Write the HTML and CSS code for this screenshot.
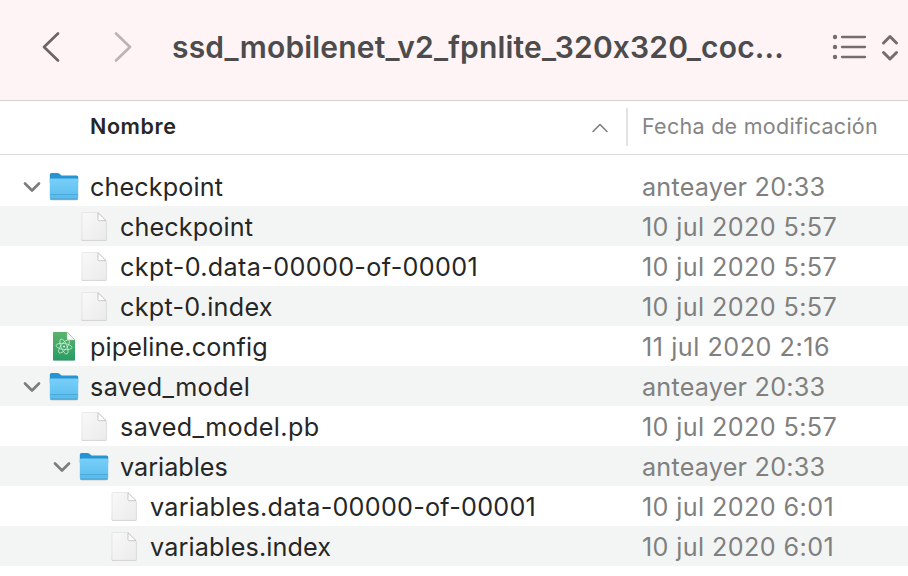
FILE: index.html
```html
<!DOCTYPE html>
<html lang="es">
<head>
<meta charset="utf-8">
<title>Finder</title>
<link rel="stylesheet" href="styles.css">
</head>
<body>
<svg class="defs" width="0" height="0" aria-hidden="true">
  <defs>
    <linearGradient id="front" x1="0" y1="0" x2="0" y2="1"><stop offset="0" stop-color="#78cff9"/><stop offset="1" stop-color="#5bbcec"/></linearGradient>
    <linearGradient id="paper" x1="0" y1="0" x2="1" y2="1"><stop offset="0" stop-color="#f9f9f9"/><stop offset="1" stop-color="#ebebeb"/></linearGradient>
    <linearGradient id="green" x1="0" y1="0" x2="0" y2="1"><stop offset="0" stop-color="#5cb46c"/><stop offset="1" stop-color="#279c63"/></linearGradient>
  </defs>
  <symbol id="folder" viewBox="0 0 32 32">
    <path d="M2 9h28v18.500q0 1.800-1.500 1.800h-25Q2 29.300 2 27.500z" fill="#000" opacity=".3"/>
    <path d="M1.800 3.700Q1.800 2 3.500 2h6q1.200 0 2 .8l1.400 1.100q.7.600 1.600.600h14Q30.200 4.500 30.200 6V12H1.800z" fill="#2594d3"/>
    <path d="M1.800 9.300Q1.800 7.600 3 7.600h26q1.200 0 1.200 1.700v17.500q0 1.500-1.500 1.500h-25.400q-1.500 0-1.500-1.500z" fill="url(#front)"/>
    <path d="M2 23.500h28" stroke="#3fa0d2" stroke-width=".7"/>
    <path d="M2 25.200h28" stroke="#4eadde" stroke-width=".4"/>
    <path d="M2.400 28h27.200" stroke="#3b9dcc" stroke-width=".8"/>
  </symbol>
  <symbol id="file" viewBox="0 0 32 32">
    <path d="M4.500 3H20l8.600 8.500v17.300q0 1.300-1.200 1.300h-22q-1.700 0-1.700-1.200z" fill="#000" opacity=".18"/>
    <path d="M4.800 1.500H20l8.300 8.300V28q0 1.300-1.300 1.300H5.300Q4 29.300 4 28V2.500Q4 1.500 4.800 1.500z" fill="url(#paper)" stroke="#dcdcdc" stroke-width=".6"/>
    <path d="M20 1.800v6.700q0 1.200 1.200 1.200H28z" fill="#fff"/>
    <path d="M28 9.700 20 1.800v6.700q0 1.200 1.200 1.200H28" fill="none" stroke="#b9b9b9" stroke-width=".8"/>
  </symbol>
  <symbol id="atom" viewBox="0 0 32 32">
    <path d="M5 2h14l8 8v20H5z" fill="#000" opacity=".14"/>
    <path d="M5.500 1h14L27 8.700v20q0 .8-.8.800H5.800q-.8 0-.8-.8V1.500Q5 1 5.500 1z" fill="url(#green)"/>
    <path d="M19 1 27 9h-7q-1 0-1-1z" fill="#f3f8f4" stroke="#9bbea2" stroke-width=".5"/>
    <g fill="none" stroke="#c9ecd2" stroke-width=".8">
      <ellipse cx="16" cy="15.500" rx="3" ry="8" transform="rotate(-22 16 15.500)"/>
      <ellipse cx="16" cy="15.500" rx="3" ry="8" transform="rotate(38 16 15.500)"/>
      <ellipse cx="16" cy="15.500" rx="3" ry="8" transform="rotate(98 16 15.500)"/>
    </g>
    <circle cx="16" cy="15.500" r="1" fill="#e6f8ea"/>
  </symbol>
  <symbol id="chev" viewBox="0 0 18 12"><path d="M2 2.500 9 9.500 16 2.500" fill="none" stroke="#7c7d7d" stroke-width="2.700" stroke-linecap="round" stroke-linejoin="round"/></symbol>
</svg>
<header class="toolbar">
  <svg class="nav" width="20" height="32" viewBox="0 0 20 32"><path d="M17 2.500 3 16 17 29.500" fill="none" stroke="#6e6465" stroke-width="2.700" stroke-linecap="round" stroke-linejoin="round"/></svg>
  <svg class="nav forward" width="20" height="32" viewBox="0 0 20 32"><path d="M3 2.500 17 16 3 29.500" fill="none" stroke="#bdb3b4" stroke-width="2.700" stroke-linecap="round" stroke-linejoin="round"/></svg>
  <h1 class="title"><span>ssd_mobilenet_v2_fpnlite_320x320_coc...</span></h1>
  <svg class="view" width="64" height="30" viewBox="0 0 64 30" fill="none" stroke="#766b6d" stroke-linecap="round" stroke-linejoin="round">
    <path d="M10 5h23M10 15h23M10 25h23" stroke-width="2.300"/>
    <g fill="#766b6d" stroke="none"><circle cx="3" cy="5" r="2.200"/><circle cx="3" cy="15" r="2.200"/><circle cx="3" cy="25" r="2.200"/></g>
    <path d="m51.500 11 6.500-6.500 6.500 6.500M51.500 20.500 58 27l6.500-6.500" stroke-width="3"/>
  </svg>
</header>
<div class="columns">
  <div class="col-name"><span>Nombre</span>
    <svg width="18" height="12" viewBox="0 0 18 12"><path d="M2 9.500 9 2.500l7 7" fill="none" stroke="#7d7d7d" stroke-width="1.600" stroke-linecap="round" stroke-linejoin="round"/></svg>
  </div>
  <div class="col-date"><span>Fecha de modificación</span></div>
</div>
<main class="rows">
  <div class="row"><div class="name"><svg class="chev"><use href="#chev"/></svg><svg class="icon"><use href="#folder"/></svg><span>checkpoint</span></div><div class="date relative"><span>anteayer 20:33</span></div></div>
  <div class="row"><div class="name level-1 leaf"><svg class="icon"><use href="#file"/></svg><span>checkpoint</span></div><div class="date"><span>10 jul 2020 5:57</span></div></div>
  <div class="row"><div class="name level-1 leaf wide"><svg class="icon"><use href="#file"/></svg><span>ckpt-0.data-00000-of-00001</span></div><div class="date"><span>10 jul 2020 5:57</span></div></div>
  <div class="row"><div class="name level-1 leaf medium"><svg class="icon"><use href="#file"/></svg><span>ckpt-0.index</span></div><div class="date"><span>10 jul 2020 5:57</span></div></div>
  <div class="row"><div class="name leaf"><svg class="icon"><use href="#atom"/></svg><span>pipeline.config</span></div><div class="date loose"><span>11 jul 2020 2:16</span></div></div>
  <div class="row"><div class="name wide"><svg class="chev"><use href="#chev"/></svg><svg class="icon"><use href="#folder"/></svg><span>saved_model</span></div><div class="date relative"><span>anteayer 20:33</span></div></div>
  <div class="row"><div class="name level-1 leaf wide"><svg class="icon"><use href="#file"/></svg><span>saved_model.pb</span></div><div class="date"><span>10 jul 2020 5:57</span></div></div>
  <div class="row"><div class="name level-1 tight"><svg class="chev"><use href="#chev"/></svg><svg class="icon"><use href="#folder"/></svg><span>variables</span></div><div class="date relative"><span>anteayer 20:33</span></div></div>
  <div class="row"><div class="name level-2 leaf medium"><svg class="icon"><use href="#file"/></svg><span>variables.data-00000-of-00001</span></div><div class="date"><span>10 jul 2020 6:01</span></div></div>
  <div class="row"><div class="name level-2 leaf"><svg class="icon"><use href="#file"/></svg><span>variables.index</span></div><div class="date"><span>10 jul 2020 6:01</span></div></div>
</main>
</body>
</html>
```
FILE: styles.css
```css
* { box-sizing: border-box; }
body {
  margin: 0;
  width: 908px;
  height: 576px;
  overflow: hidden;
  background: #fff;
  color: #262626;
  font-family: Inter, "Liberation Sans", sans-serif;
  font-feature-settings: "calt" 0;
  white-space: nowrap;
}
svg { display: block; flex: none; }
.defs { position: absolute; }
.toolbar {
  display: flex;
  align-items: center;
  height: 101px;
  padding: 0 10px 7px 41px;
  background: #fef4f5;
  border-bottom: 1px solid #d6d2d2;
}
.nav.forward { margin-left: 52px; }
.title {
  width: 660px;
  margin: 0 0 0 39px;
  color: #4d4b4b;
  font-size: 30px;
  font-weight: 600;
  line-height: 36px;
  letter-spacing: 0.17px;
}
.view { width: 64px; overflow: visible; }
.columns {
  display: flex;
  align-items: center;
  height: 54px;
  padding-bottom: 2px;
  border-bottom: 1px solid #dadada;
  font-size: 21.5px;
  letter-spacing: 0.28px;
}
.columns span { margin-top: -2px; }
.col-name {
  display: flex;
  align-items: center;
  justify-content: space-between;
  width: 628px;
  height: 38px;
  padding: 0 17px 0 90px;
  border-right: 2px solid #e2e2e2;
  font-weight: 600;
  letter-spacing: 0.6px;
}
.col-name svg { margin-top: 2px; }
.col-date { padding-left: 14px; color: #858585; margin-top: -2px; }
.rows { padding-top: 11px; font-size: 25.2px; }
.row { display: flex; align-items: center; height: 40px; }
.row:nth-child(even) { background: #f3f5f4; }
.name { display: flex; align-items: center; width: 642px; padding-left: 23px; letter-spacing: 0.12px; }
.name.wide { letter-spacing: 0.34px; }
.name.medium { letter-spacing: 0.25px; }
.name.tight { letter-spacing: 0; }
.name.leaf { padding-left: 48px; }
.name.level-1 { padding-left: 53px; }
.name.level-1.leaf { padding-left: 78px; }
.name.level-2.leaf { padding-left: 108px; }
.name span, .date { margin-top: 2px; }
.chev { width: 18px; height: 12px; margin: 2px 7px 0 0; }
.icon { width: 32px; height: 32px; margin: 2px 10px 0 0; }
.date { color: #808080; letter-spacing: 0.38px; }
.date.relative { letter-spacing: 0.22px; }
.date.loose { letter-spacing: 0.52px; }
```
